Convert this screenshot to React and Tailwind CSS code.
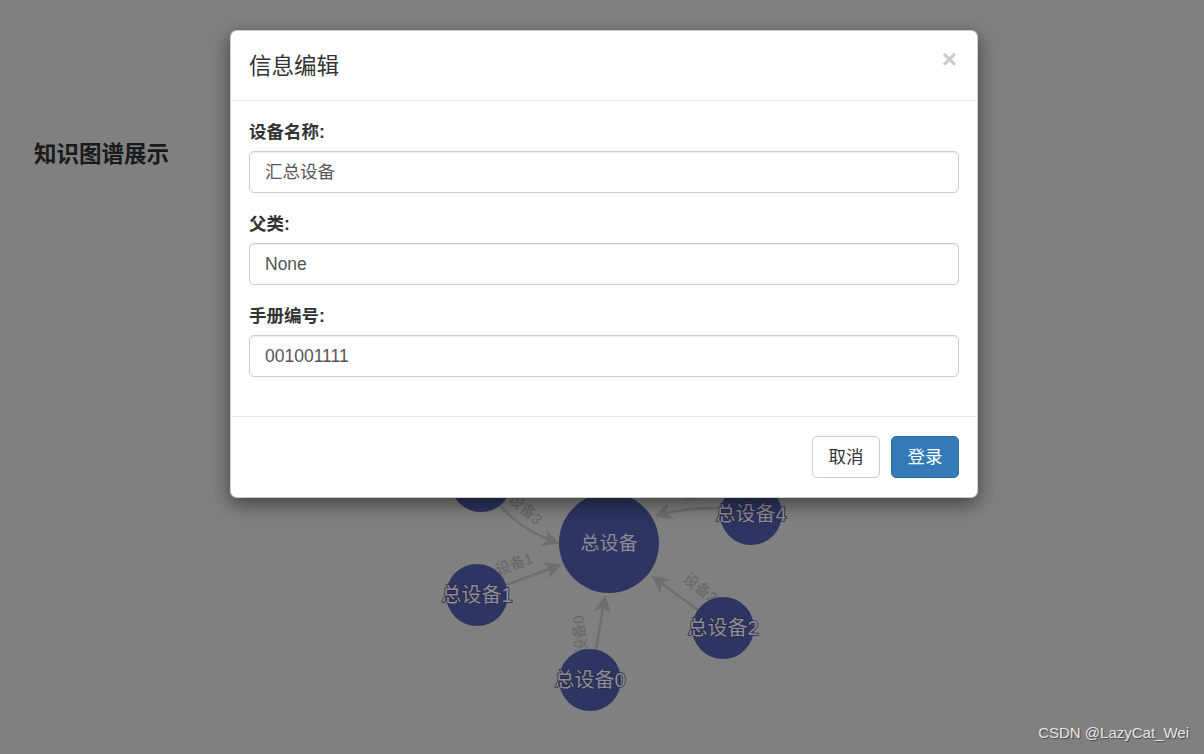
import React from 'react';

const font = { fontFamily: '"Liberation Sans", "Noto Sans CJK SC", sans-serif' };

const nodes = [
  { id: 3, x: 481, y: 481, label: '总设备3' },
  { id: 1, x: 477, y: 595, label: '总设备1' },
  { id: 0, x: 590, y: 680, label: '总设备0' },
  { id: 2, x: 723, y: 628, label: '总设备2' },
  { id: 4, x: 751, y: 514, label: '总设备4' },
];

const Graph = () => (
  <svg width="1204" height="584" viewBox="0 170 1204 584" className="block">
    <defs>
      <marker id="arrow" viewBox="0 0 10 10" refX="9" refY="5" markerWidth="7" markerHeight="7" orient="auto">
        <path d="M0,0 L10,5 L0,10 L3,5 Z" fill="#6e6e6e" />
      </marker>
    </defs>
    <g stroke="#6e6e6e" strokeWidth="2.5" fill="none" markerEnd="url(#arrow)">
      <path d="M500,505 Q520,530 558,543" />
      <path d="M506,585 L560,565" />
      <path d="M596,649 L605,597" />
      <path d="M698,610 L653,577" />
      <path d="M720,508 Q680,508 656,516" />
    </g>
    <g fill="#666" fontSize="15" style={font}>
      <text x="522" y="513" transform="rotate(42 522 513)" textAnchor="middle">设备3</text>
      <text x="516" y="569" transform="rotate(-20 516 569)" textAnchor="middle">设备1</text>
      <text x="585" y="634" transform="rotate(-95 585 634)" textAnchor="middle">设备0</text>
      <text x="697" y="592" transform="rotate(38 697 592)" textAnchor="middle">设备2</text>
      <text x="702" y="497" transform="rotate(-8 702 497)" textAnchor="middle">设备4</text>
    </g>
    <circle cx="609" cy="543" r="50" fill="#2e3562" />
    <text x="609" y="550" fill="#8c8c96" fontSize="19" textAnchor="middle" style={font}>总设备</text>
    {nodes.map((n) => (
      <g key={n.id}>
        <circle cx={n.x} cy={n.y} r="31" fill="#2e3562" />
        <text
          x={n.x}
          y={n.y + 7}
          fill="#8c8c9c"
          stroke="#2a2a40"
          strokeWidth="1.5"
          paintOrder="stroke"
          fontSize="20"
          textAnchor="middle"
          style={font}
        >
          {n.label}
        </text>
      </g>
    ))}
  </svg>
);

const Field = ({ label, value }) => (
  <div className="mb-[19px]">
    <label className="block mb-[6px] text-[17.5px] leading-[25px] font-bold text-[#333]">{label}</label>
    <div className="h-[42px] w-full rounded-[5px] border border-[#ccc] bg-white px-[15px] flex items-center text-[17.5px] text-[#555] shadow-[inset_0_1px_1px_rgba(0,0,0,0.075)]">
      {value}
    </div>
  </div>
);

export default function App() {
  return (
    <div className="relative w-[1204px] h-[754px] overflow-hidden bg-[#808080]" style={font}>
      <div className="pt-[140px] pl-[34px] h-[170px]">
        <h3 className="text-[22.5px] leading-[30px] font-bold text-[#1a1a1a]">知识图谱展示</h3>
      </div>
      <Graph />

      <div className="absolute inset-0">
        <div className="ml-[230px] mt-[30px] w-[748px] bg-white rounded-[7px] border border-black/20 shadow-[0_6px_19px_rgba(0,0,0,0.5)]">
          <div className="flex items-center justify-between h-[70px] px-[18px] border-b border-[#e5e5e5]">
            <h4 className="text-[22.5px] text-[#333] pt-[2px]">信息编辑</h4>
            <span className="text-[26px] font-bold text-[#c9c9c9] leading-none -mt-[14px] mr-[2px]">×</span>
          </div>
          <div className="px-[18px] pt-[19px] pb-[20px]">
            <Field label="设备名称:" value="汇总设备" />
            <Field label="父类:" value="None" />
            <Field label="手册编号:" value="001001111" />
          </div>
          <div className="border-t border-[#e5e5e5] flex justify-end gap-[11px] px-[18px] pt-[19px] pb-[19px]">
            <button className="h-[42px] w-[68px] rounded-[5px] border border-[#ccc] bg-white text-[17.5px] text-[#333]">取消</button>
            <button className="h-[42px] w-[68px] rounded-[5px] border border-[#2e6da4] bg-[#337ab7] text-[17.5px] text-white">登录</button>
          </div>
        </div>
      </div>

      <div className="absolute right-[15px] bottom-[10px] text-[15px] text-[#e6e6e6] [text-shadow:1px_1px_1px_rgba(0,0,0,0.45)]">
        CSDN @LazyCat_Wei
      </div>
    </div>
  );
}
